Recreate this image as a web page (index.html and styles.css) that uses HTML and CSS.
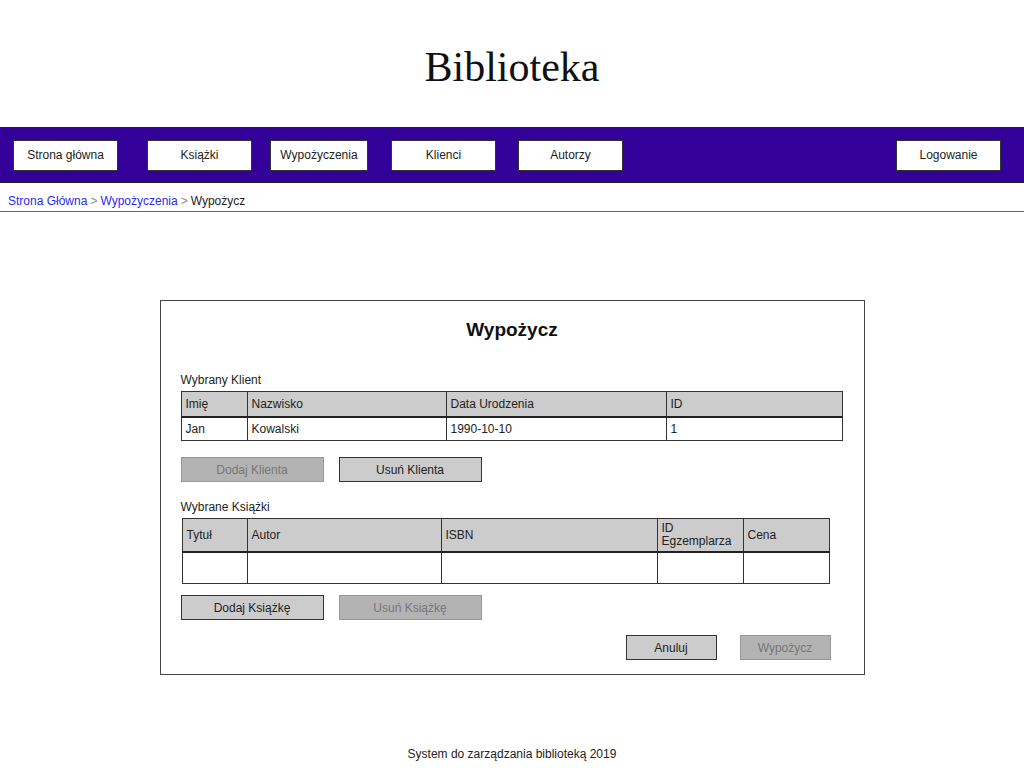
FILE: index.html
```html
<!DOCTYPE html>
<html>
	<head>
		<meta charset="utf-8">
		<title>Biblioteka</title>
		<link rel="stylesheet" href="styles.css">
	</head>
	<body>
		<h1 class="title">Biblioteka</h1>
		<div class="nav">
			<a class="navBtn" href="#">Strona główna</a>
			<a class="navBtn n2" href="#">Książki</a>
			<a class="navBtn n3" href="#">Wypożyczenia</a>
			<a class="navBtn" href="#">Klienci</a>
			<a class="navBtn n5" href="#">Autorzy</a>
			<a class="navBtn login" href="#">Logowanie</a>
		</div>
		<div class="crumbs">
			<a href="#">Strona Główna</a><span class="sep">&gt;</span><a href="#">Wypożyczenia</a><span class="sep">&gt;</span><span>Wypożycz</span>
		</div>

		<div class="panel">
			<h2>Wypożycz</h2>

			<div class="label first">Wybrany Klient</div>
			<table class="grid klient">
				<tr class="head">
					<td class="c1">Imię</td>
					<td class="c2">Nazwisko</td>
					<td class="c3">Data Urodzenia</td>
					<td>ID</td>
				</tr>
				<tr>
					<td>Jan</td>
					<td>Kowalski</td>
					<td>1990-10-10</td>
					<td>1</td>
				</tr>
			</table>
			<div class="btns">
				<span class="btn off">Dodaj Klienta</span>
				<span class="btn">Usuń Klienta</span>
			</div>

			<div class="label">Wybrane Książki</div>
			<table class="grid ksiazki">
				<tr class="head">
					<td class="k1">Tytuł</td>
					<td class="k2">Autor</td>
					<td class="k3">ISBN</td>
					<td class="k4">ID<br>Egzemplarza</td>
					<td>Cena</td>
				</tr>
				<tr>
					<td></td>
					<td></td>
					<td></td>
					<td></td>
					<td></td>
				</tr>
			</table>
			<div class="btns">
				<span class="btn">Dodaj Książkę</span>
				<span class="btn off">Usuń Książkę</span>
			</div>

			<div class="actions">
				<span class="btn small">Anuluj</span>
				<span class="btn small off">Wypożycz</span>
			</div>
		</div>

		<div class="footer">System do zarządzania biblioteką 2019</div>
	</body>
</html>
```

FILE: styles.css
```css
* {
	margin: 0;
	padding: 0;
	box-sizing: border-box;
}

body {
	font-family: "Liberation Sans", Arial, sans-serif;
	font-size: 12px;
	color: #222;
	background: #fff;
}

.title {
	font-family: "Liberation Serif", "Times New Roman", serif;
	font-weight: normal;
	font-size: 42px;
	text-align: center;
	height: 127px;
	padding-top: 42px;
	line-height: 50px;
	color: #111;
}

/* pasek menu */
.nav {
	height: 56px;
	background: #330099;
	border-top: 1px solid #222;
	border-bottom: 1px solid #222;
	display: flex;
	align-items: center;
	padding: 0 23px 0 13px;
	gap: 23px;
}

.navBtn {
	display: flex;
	justify-content: center;
	align-items: center;
	width: 105px;
	height: 31px;
	background: #fff;
	border: 1px solid #333;
	color: #222;
	text-decoration: none;
	font-size: 12px;
}

.navBtn.n2 {
	margin-left: 6px;
}

.navBtn.n3 {
	width: 98px;
	margin-left: -5px;
}

.navBtn.n5 {
	margin-left: -1px;
}

.navBtn.login {
	margin-left: auto;
}

/* okruszki */
.crumbs {
	height: 29px;
	border-bottom: 1px solid #666;
	padding: 10px 8px 0;
	font-size: 12px;
	line-height: 16px;
	color: #222;
}

.crumbs a {
	color: #2b2bf5;
	text-decoration: none;
}

.crumbs .sep {
	color: #888;
	padding: 0 3px;
}

/* okno */
.panel {
	width: 705px;
	margin: 88px auto 0;
	border: 1px solid #444;
	padding: 17px 20px 14px;
}

.panel h2 {
	font-size: 19px;
	font-weight: bold;
	text-align: center;
	line-height: 24px;
	color: #111;
}

.label {
	margin-top: 17px;
	line-height: 16px;
	font-size: 12px;
}

.label.first {
	margin-top: 30px;
}

.grid {
	border-collapse: collapse;
	margin-top: 3px;
	font-size: 12px;
	color: #222;
}

.grid td {
	border: 1px solid #333;
	padding: 0 4px;
	vertical-align: middle;
	text-align: left;
}

.grid .head td {
	background: #cccccc;
	border-bottom: 2px solid #222;
}

.klient {
	width: 662px;
}

.klient tr {
	height: 24px;
}

.klient tr.head {
	height: 25px;
}

.klient .c1 { width: 66px; }
.klient .c2 { width: 199px; }
.klient .c3 { width: 220px; }

.ksiazki {
	width: 648px;
	margin-left: 1px;
}

.ksiazki tr.head {
	height: 33px;
}

.ksiazki tr {
	height: 32px;
}

.ksiazki .k1 { width: 65px; }
.ksiazki .k2 { width: 194px; }
.ksiazki .k3 { width: 216px; }
.ksiazki .k4 { width: 86px; line-height: 13px; }

/* przyciski */
.btns {
	display: flex;
	gap: 15px;
	margin-top: 16px;
}

.ksiazki + .btns {
	margin-top: 11px;
}

.btn {
	display: flex;
	justify-content: center;
	align-items: center;
	width: 143px;
	height: 25px;
	background: #cccccc;
	border: 1px solid #333;
	color: #222;
	font-size: 12px;
}

.btn.off {
	background: #b3b3b3;
	border-color: #999;
	color: #777;
}

.actions {
	display: flex;
	justify-content: flex-end;
	gap: 23px;
	margin-top: 15px;
	padding-right: 13px;
}

.btn.small {
	width: 91px;
}

.footer {
	text-align: center;
	margin-top: 71px;
	line-height: 16px;
	font-size: 12px;
	color: #222;
}
```
